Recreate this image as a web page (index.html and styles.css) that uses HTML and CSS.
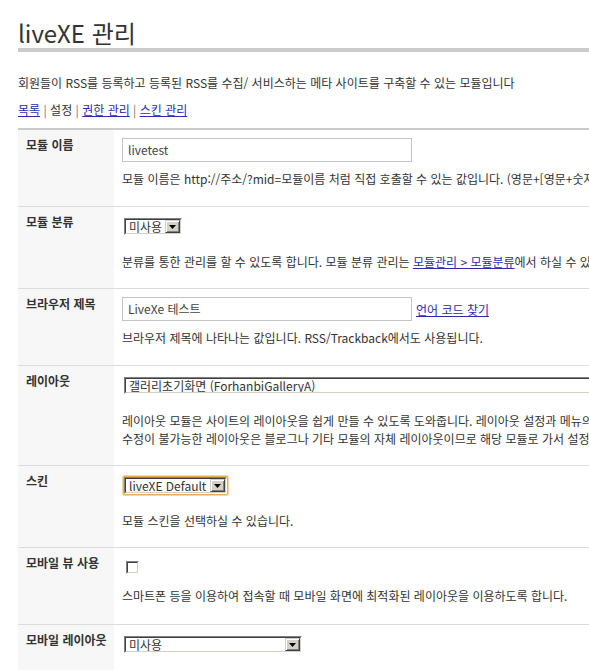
FILE: index.html
```html
<!DOCTYPE html>
<html lang="ko">
<head>
<meta charset="utf-8">
<title>liveXE 관리</title>
<link rel="stylesheet" href="styles.css">
</head>
<body>
<div class="page">
  <h1 class="title">liveXE 관리</h1>
  <p class="intro">회원들이 RSS를 등록하고 등록된 RSS를 수집/ 서비스하는 메타 사이트를 구축할 수 있는 모듈입니다</p>
  <p class="nav"><a href="#">목록</a> <span class="sep">|</span> <span class="current">설정</span> <span class="sep">|</span> <a href="#">권한 관리</a> <span class="sep">|</span> <a href="#">스킨 관리</a></p>

  <table class="form">
    <tr>
      <th>모듈 이름</th>
      <td class="cell cell-input">
        <div class="ctl"><span class="text-input">livetest</span></div>
        <p class="desc">모듈 이름은 http://주소/?mid=모듈이름 처럼 직접 호출할 수 있는 값입니다. (영문+[영문+숫자+_]만 가능. 최대 40 글자)</p>
      </td>
    </tr>
    <tr>
      <th>모듈 분류</th>
      <td class="cell cell-select">
        <div class="ctl"><span class="select w-cat"><span class="select-in"><span class="select-text">미사용</span><span class="select-btn"><svg width="7" height="4" viewBox="0 0 7 4"><path d="M0 0h7L3.5 4z" fill="#000"/></svg></span></span></span></div>
        <p class="desc">분류를 통한 관리를 할 수 있도록 합니다. 모듈 분류 관리는 <a href="#">모듈관리 &gt; 모듈분류</a>에서 하실 수 있습니다.</p>
      </td>
    </tr>
    <tr>
      <th>브라우저 제목</th>
      <td class="cell cell-input">
        <div class="ctl"><span class="text-input">LiveXe 테스트</span> <a href="#" class="lang">언어 코드 찾기</a></div>
        <p class="desc">브라우저 제목에 나타나는 값입니다. RSS/Trackback에서도 사용됩니다.</p>
      </td>
    </tr>
    <tr>
      <th>레이아웃</th>
      <td class="cell cell-select">
        <div class="ctl"><span class="select w-layout"><span class="select-in"><span class="select-text">갤러리초기화면 (ForhanbiGalleryA)</span><span class="select-btn"><svg width="7" height="4" viewBox="0 0 7 4"><path d="M0 0h7L3.5 4z" fill="#000"/></svg></span></span></span></div>
        <p class="desc">레이아웃 모듈은 사이트의 레이아웃을 쉽게 만들 수 있도록 도와줍니다. 레이아웃 설정과 메뉴의 연결을 통해 사이트의 대표적인 모습을 구현할 수 있습니다. 삭제불가나<br>수정이 불가능한 레이아웃은 블로그나 기타 모듈의 자체 레이아웃이므로 해당 모듈로 가서 설정하셔야 합니다.</p>
      </td>
    </tr>
    <tr>
      <th>스킨</th>
      <td class="cell cell-select">
        <div class="ctl"><span class="select w-skin focused"><span class="select-in"><span class="select-text">liveXE Default</span><span class="select-btn"><svg width="7" height="4" viewBox="0 0 7 4"><path d="M0 0h7L3.5 4z" fill="#000"/></svg></span></span></span></div>
        <p class="desc">모듈 스킨을 선택하실 수 있습니다.</p>
      </td>
    </tr>
    <tr>
      <th>모바일 뷰 사용</th>
      <td class="cell cell-check">
        <div class="ctl"><span class="checkbox"><span class="checkbox-in"></span></span></div>
        <p class="desc">스마트폰 등을 이용하여 접속할 때 모바일 화면에 최적화된 레이아웃을 이용하도록 합니다.</p>
      </td>
    </tr>
    <tr>
      <th>모바일 레이아웃</th>
      <td class="cell cell-select">
        <div class="ctl"><span class="select w-mobile"><span class="select-in"><span class="select-text">미사용</span><span class="select-btn"><svg width="7" height="4" viewBox="0 0 7 4"><path d="M0 0h7L3.5 4z" fill="#000"/></svg></span></span></span></div>
        <p class="desc">모바일 화면에서 사용할 레이아웃을 선택하실 수 있습니다.</p>
      </td>
    </tr>
  </table>
</div>
</body>
</html>
```

FILE: styles.css
```css
html, body {
  margin: 0;
  padding: 0;
  overflow: hidden;
  background: #fff;
}
body {
  font-family: "Noto Sans CJK KR", "Noto Sans", sans-serif;
  font-size: 12px;
  color: #333;
}
.page {
  padding: 19px 0 0 18px;
  width: 1200px;
}
a {
  color: #2b2bb0;
  text-decoration: underline;
}
.title {
  margin: 0;
  font-size: 24px;
  line-height: 28px;
  font-weight: normal;
  color: #333;
  padding-bottom: 1px;
  border-bottom: 4px solid #cbcbcb;
}
.intro {
  margin: 22px 0 0;
  line-height: 18px;
}
.nav {
  margin: 9px 0 0;
  line-height: 18px;
}
.nav .sep {
  color: #777;
}
.nav .current {
  color: #333;
}
.form {
  margin-top: 9px;
  border-collapse: collapse;
  border-top: 2px solid #cbcbcb;
  width: 1180px;
}
.form tr {
  border-bottom: 1px solid #dcdcdc;
}
.form th {
  width: 88px;
  padding: 6px 0 0 8px;
  background: #f7f7f7;
  text-align: left;
  vertical-align: top;
  font-weight: bold;
  line-height: 18px;
  white-space: nowrap;
  color: #333;
}
.cell {
  padding: 8px 10px 17px 8px;
  vertical-align: top;
  white-space: nowrap;
}
.ctl {
  display: flex;
  align-items: center;
  height: 23px;
}
.desc {
  margin: 15px 0 0;
  line-height: 18px;
}
.cell-input {
  padding-bottom: 18px;
}
.cell-input .ctl {
  height: 24px;
}
.cell-input .desc {
  margin-top: 8px;
}
.cell-check {
  padding-bottom: 19px;
}
.cell-check .ctl {
  height: 22px;
}
.cell-check .desc {
  margin-top: 9px;
}
.text-input {
  box-sizing: border-box;
  display: inline-block;
  width: 290px;
  height: 24px;
  border: 1px solid #c4c4c4;
  padding: 0 5px;
  line-height: 22px;
  color: #444;
  background: #fff;
}
.lang {
  margin-left: 4px;
}
.select {
  box-sizing: border-box;
  display: inline-flex;
  height: 17px;
  margin-left: 2px;
  border-style: solid;
  border-width: 1px;
  border-color: #808080 #ffffff #ffffff #808080;
  background: #fff;
}
.select-in {
  flex: 1;
  display: flex;
  border-style: solid;
  border-width: 1px;
  border-color: #404040 #d4d0c8 #d4d0c8 #404040;
  min-width: 0;
}
.select-text {
  flex: 1;
  padding-left: 3px;
  line-height: 13px;
  font-size: 12px;
  color: #333;
  overflow: hidden;
}
.select-btn {
  box-sizing: border-box;
  width: 15px;
  height: 13px;
  background: #d4d0c8;
  border-style: solid;
  border-width: 1px;
  border-color: #d4d0c8 #404040 #404040 #d4d0c8;
  box-shadow: inset 1px 1px 0 #fff, inset -1px -1px 0 #808080;
  display: flex;
  align-items: center;
  justify-content: center;
}
.select-btn svg {
  display: block;
  margin-top: 1px;
}
.w-cat { width: 58px; }
.w-layout { width: 560px; }
.w-skin { width: 103px; }
.w-mobile { width: 178px; }
.focused {
  border-radius: 1px;
  box-shadow: 0 0 0 1px #e6b04c, 0 0 0 2px #f4d89a;
}
.checkbox {
  box-sizing: border-box;
  display: inline-block;
  width: 13px;
  height: 13px;
  margin-left: 4px;
  border-style: solid;
  border-width: 1px;
  border-color: #808080 #ffffff #ffffff #808080;
}
.checkbox-in {
  box-sizing: border-box;
  display: block;
  width: 11px;
  height: 11px;
  border-style: solid;
  border-width: 1px;
  border-color: #404040 #d4d0c8 #d4d0c8 #404040;
  background: #fff;
}
```
